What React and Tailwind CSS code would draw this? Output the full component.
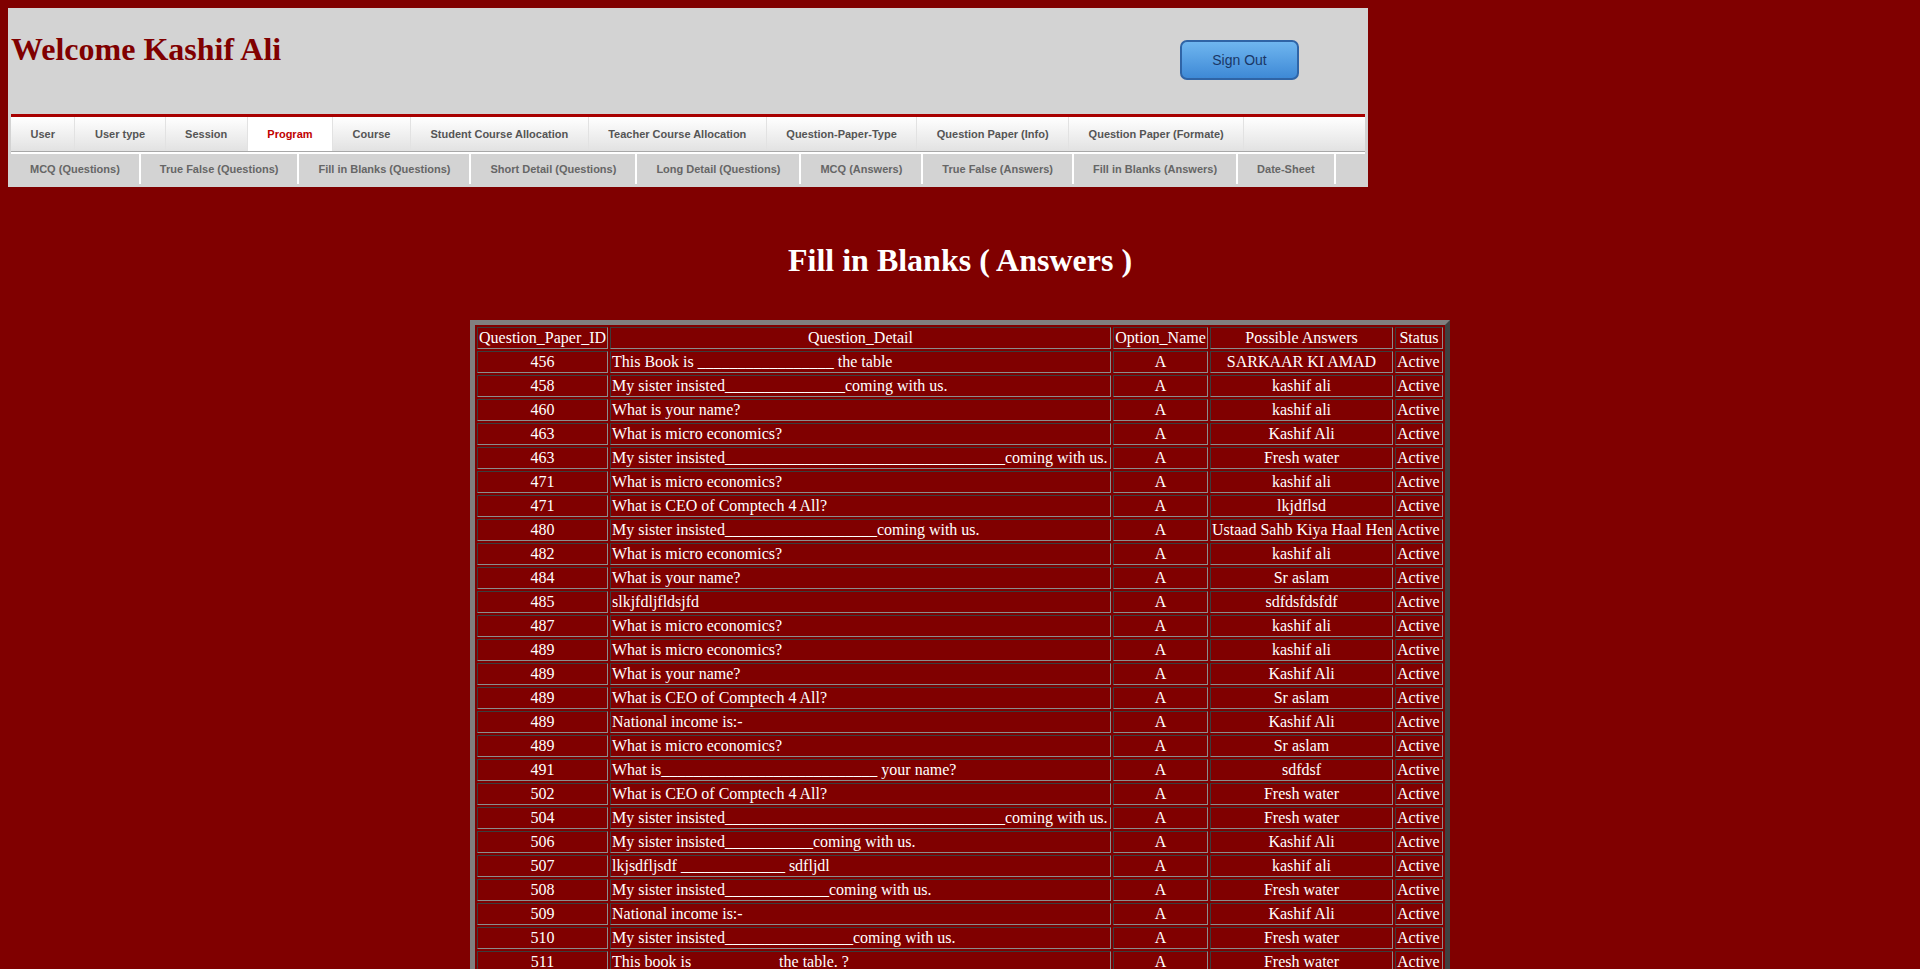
import React from 'react';

const U = (n) => '_'.repeat(n);
const S = (n) => '\u00a0'.repeat(n);

const topNav = [
    'User',
    'User type',
    'Session',
    'Program',
    'Course',
    'Student Course Allocation',
    'Teacher Course Allocation',
    'Question-Paper-Type',
    'Question Paper (Info)',
    'Question Paper (Formate)',
];

const subNav = [
    'MCQ (Questions)',
    'True False (Questions)',
    'Fill in Blanks (Questions)',
    'Short Detail (Questions)',
    'Long Detail (Questions)',
    'MCQ (Answers)',
    'True False (Answers)',
    'Fill in Blanks (Answers)',
    'Date-Sheet',
];

// [paper id, question, possible answer]
const rows = [
    ['456', `This Book is ${U(17)} the table`, 'SARKAAR KI AMAD'],
    ['458', `My sister insisted${U(15)}coming with us.`, 'kashif ali'],
    ['460', 'What is your name?', 'kashif ali'],
    ['463', 'What is micro economics?', 'Kashif Ali'],
    ['463', `My sister insisted${U(35)}coming with us.`, 'Fresh water'],
    ['471', 'What is micro economics?', 'kashif ali'],
    ['471', 'What is CEO of Comptech 4 All?', 'lkjdflsd'],
    ['480', `My sister insisted${U(19)}coming with us.`, 'Ustaad Sahb Kiya Haal Hen'],
    ['482', 'What is micro economics?', 'kashif ali'],
    ['484', 'What is your name?', 'Sr aslam'],
    ['485', 'slkjfdljfldsjfd', 'sdfdsfdsfdf'],
    ['487', 'What is micro economics?', 'kashif ali'],
    ['489', 'What is micro economics?', 'kashif ali'],
    ['489', 'What is your name?', 'Kashif Ali'],
    ['489', 'What is CEO of Comptech 4 All?', 'Sr aslam'],
    ['489', 'National income is:-', 'Kashif Ali'],
    ['489', 'What is micro economics?', 'Sr aslam'],
    ['491', `What is${U(27)} your name?`, 'sdfdsf'],
    ['502', 'What is CEO of Comptech 4 All?', 'Fresh water'],
    ['504', `My sister insisted${U(35)}coming with us.`, 'Fresh water'],
    ['506', `My sister insisted${U(11)}coming with us.`, 'Kashif Ali'],
    ['507', `lkjsdfljsdf ${U(13)} sdfljdl`, 'kashif ali'],
    ['508', `My sister insisted${U(13)}coming with us.`, 'Fresh water'],
    ['509', 'National income is:-', 'Kashif Ali'],
    ['510', `My sister insisted${U(16)}coming with us.`, 'Fresh water'],
    ['511', `This book is${S(22)}the table. ?`, 'Fresh water'],
];

const cell =
    'border border-t-[#3c3c3c] border-l-[#3c3c3c] border-r-[#8c8c8c] border-b-[#8c8c8c] p-px leading-[18px] whitespace-nowrap font-normal';

const App = () => {
    return (
        <div className="min-h-screen bg-[#800000] pt-2 pb-4 font-['Liberation_Serif','Times_New_Roman',serif]">
            {/* header box */}
            <div className="ml-2 w-[1360px] bg-[#d3d3d3] p-[3px]">
                <div className="flex justify-between h-[103px]">
                    <h1 className="mt-[20px] text-[32px] leading-[37px] font-bold text-[#800000]">
                        Welcome Kashif Ali
                    </h1>
                    <button className="mt-[29px] mr-[66px] w-[119px] h-[40px] rounded-[7px] border-2 border-[#2f64a6] bg-linear-to-b from-[#6fb6ef] to-[#3e89d6] text-[14px] text-[#1a3766] font-['Liberation_Sans',Arial,sans-serif]">
                        Sign Out
                    </button>
                </div>

                <nav className="font-['Liberation_Sans',Arial,sans-serif] text-[11px] font-bold">
                    <div className="flex h-[38px] border-t-[3px] border-b border-t-[#a80000] border-b-[#a8a8a8] bg-linear-to-b from-white to-[#e2e2e2]">
                        {topNav.map((item) => (
                            <a
                                key={item}
                                className={`flex items-center px-[19.5px] border-r border-[#e2e2e2] whitespace-nowrap ${item === 'Program' ? 'bg-white text-[#c00000]' : 'text-[#555555]'}`}
                            >
                                {item}
                            </a>
                        ))}
                    </div>
                    <div className="flex h-[32px] border-t-2 border-white">
                        {subNav.map((item) => (
                            <a
                                key={item}
                                className="flex items-center px-[19px] border-r-2 border-white whitespace-nowrap text-[#666666]"
                            >
                                {item}
                            </a>
                        ))}
                    </div>
                </nav>
            </div>

            <h1 className="mt-[55px] text-center text-[32px] leading-[37px] font-bold text-white">
                Fill in Blanks ( Answers )
            </h1>

            <table className="mx-auto mt-[41px] w-[980px] table-fixed border-separate border-spacing-[2px] border-[5px] border-t-[#808080] border-l-[#808080] border-r-[#404040] border-b-[#404040] text-[16px] text-white">
                <thead>
                    <tr>
                        <th className={`${cell} w-[131px] text-center`}>Question_Paper_ID</th>
                        <th className={`${cell} w-[501px] text-center`}>Question_Detail</th>
                        <th className={`${cell} w-[95px] text-center`}>Option_Name</th>
                        <th className={`${cell} w-[183px] text-center`}>Possible Answers</th>
                        <th className={`${cell} w-[48px] text-center`}>Status</th>
                    </tr>
                </thead>
                <tbody>
                    {rows.map(([id, question, answer], i) => (
                        <tr key={i}>
                            <td className={`${cell} text-center`}>{id}</td>
                            <td className={`${cell} text-left`}>{question}</td>
                            <td className={`${cell} text-center`}>A</td>
                            <td className={`${cell} text-center`}>{answer}</td>
                            <td className={`${cell} text-left`}>Active</td>
                        </tr>
                    ))}
                </tbody>
            </table>
        </div>
    );
};

export default App;
